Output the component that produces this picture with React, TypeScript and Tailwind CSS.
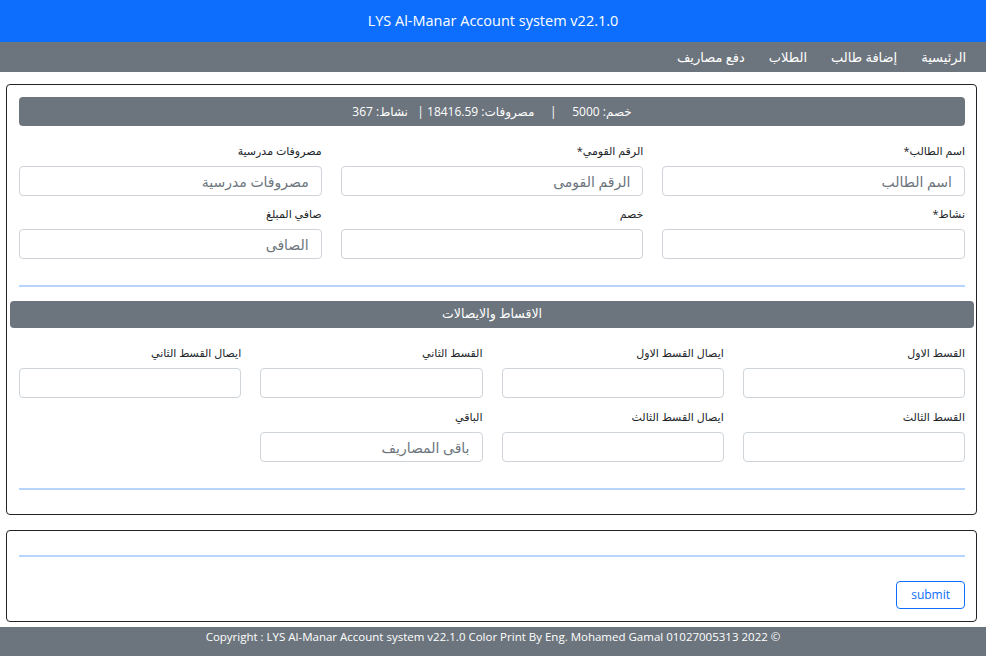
import React from "react";

interface FieldProps {
  label: string;
  placeholder?: string;
}

const Field = ({ label, placeholder }: FieldProps) => {
  return (
    <div className="flex flex-col">
      <label className="text-[11px] leading-[16px] text-[#212529] mb-[7px]">
        {label}
      </label>
      <input
        type="text"
        placeholder={placeholder}
        className="h-[30px] w-full rounded-[4px] border border-[#ced4da] bg-white px-3 text-[14px] text-[#212529] placeholder:text-[#6c757d] outline-none"
      />
    </div>
  );
};

const navLinks = ["الرئيسية", "إضافة طالب", "الطلاب", "دفع مصاريف"];

export default function App() {
  return (
    <div
      dir="rtl"
      className="min-h-[656px] bg-white flex flex-col"
      style={{ fontFamily: '"Open Sans", "DejaVu Sans", sans-serif' }}
    >
      <header
        dir="ltr"
        className="h-[42px] bg-[#0d6efd] flex items-center justify-center text-white text-[14.5px]"
      >
        LYS Al-Manar Account system v22.1.0
      </header>

      <nav className="h-[30px] bg-[#6c757d] flex items-center gap-[24px] pr-[20px] text-white text-[13px]">
        {navLinks.map((link) => (
          <a key={link} href="#" className="leading-none">
            {link}
          </a>
        ))}
      </nav>

      <main className="flex-1 pl-[6px] pr-[9px] pt-[12px] flex flex-col gap-[15px]">
        <section className="border border-[#212529] rounded-[4px] pl-[12px] pr-[11px] pt-[12px] pb-[24px]">
          <div className="h-[29px] bg-[#6c757d] rounded-[4px] flex items-center justify-center text-white text-[12px] whitespace-pre">
            {"خصم: 5000     |     مصروفات: 18416.59 |   نشاط: 367"}
          </div>

          <div className="grid grid-cols-3 gap-x-[19px] gap-y-[10px] mt-[17px]">
            <Field label="اسم الطالب*" placeholder="اسم الطالب" />
            <Field label="الرقم القومي*" placeholder="الرقم القومى" />
            <Field label="مصروفات مدرسية" placeholder="مصروفات مدرسية" />
            <Field label="نشاط*" />
            <Field label="خصم" />
            <Field label="صافي المبلغ" placeholder="الصافى" />
          </div>

          <hr className="mt-[26px] border-0 h-[2px] bg-[#b6d4fe]" />

          <div className="ml-[-9px] mr-[-9px] mt-[14px] h-[27px] bg-[#6c757d] rounded-[4px] flex items-center justify-center text-white text-[12.5px]">
            الاقساط والايصالات
          </div>

          <div className="grid grid-cols-4 gap-x-[19px] gap-y-[11px] mt-[17px]">
            <Field label="القسط الاول" />
            <Field label="ايصال القسط الاول" />
            <Field label="القسط الثاني" />
            <Field label="ايصال القسط الثاني" />
            <Field label="القسط الثالث" />
            <Field label="ايصال القسط الثالث" />
            <Field label="الباقي" placeholder="باقى المصاريف" />
          </div>

          <hr className="mt-[26px] border-0 h-[2px] bg-[#b6d4fe]" />
        </section>

        <section className="border border-[#212529] rounded-[4px] pl-[12px] pr-[11px] pt-[24px] pb-[12px]">
          <hr className="border-0 h-[2px] bg-[#b6d4fe]" />
          <div className="flex justify-start mt-[24px]">
            <button
              type="submit"
              className="h-[28px] px-[14px] rounded-[4px] border border-[#0d6efd] text-[#0d6efd] text-[12px] bg-white"
            >
              submit
            </button>
          </div>
        </section>
      </main>

      <footer
        dir="ltr"
        className="mt-[4px] h-[29px] bg-[#6c757d] flex items-start justify-center pt-[1px] text-white text-[11.5px]"
      >
        Copyright : LYS Al-Manar Account system v22.1.0 Color Print By Eng. Mohamed Gamal 01027005313 2022 ©
      </footer>
    </div>
  );
}
